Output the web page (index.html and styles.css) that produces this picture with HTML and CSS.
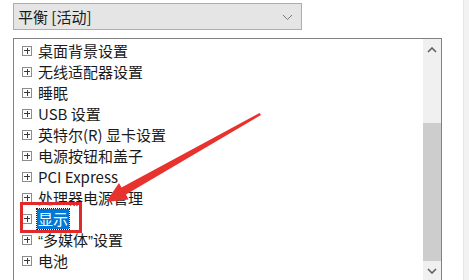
FILE: index.html
```html
<!DOCTYPE html>
<html lang="zh-CN">
<head>
    <meta charset="UTF-8">
    <title>电源选项 - 高级设置</title>
    <link rel="stylesheet" href="styles.css">
</head>
<body>
    <div class="page">
        <div class="panel">
            <div class="select">
                <span>平衡 [活动]</span>
                <svg class="chev" width="11" height="7" viewBox="0 0 11 7"><path d="M1 1 L5.5 5.5 L10 1" fill="none" stroke="#7a7a7a" stroke-width="1"/></svg>
            </div>
            <div class="tree">
                <ul class="items">
                    <li><i class="plus"></i><span>桌面背景设置</span></li>
                    <li><i class="plus"></i><span>无线适配器设置</span></li>
                    <li><i class="plus"></i><span>睡眠</span></li>
                    <li><i class="plus"></i><span>USB 设置</span></li>
                    <li><i class="plus"></i><span>英特尔(R) 显卡设置</span></li>
                    <li><i class="plus"></i><span>电源按钮和盖子</span></li>
                    <li><i class="plus"></i><span>PCI Express</span></li>
                    <li><i class="plus"></i><span>处理器电源管理</span></li>
                    <li><i class="plus"></i><span class="selected">显示</span></li>
                    <li><i class="plus"></i><span><span class="q">“</span>多媒体<span class="q">”</span>设置</span></li>
                    <li><i class="plus"></i><span>电池</span></li>
                </ul>
                <div class="scrollbar">
                    <div class="btn up"><svg width="10" height="6" viewBox="0 0 10 6"><path d="M1 5 L5 1 L9 5" fill="none" stroke="#606060" stroke-width="1.6"/></svg></div>
                    <div class="track"></div>
                    <div class="thumb"></div>
                    <div class="btn down"><svg width="10" height="6" viewBox="0 0 10 6"><path d="M1 1 L5 5 L9 1" fill="none" stroke="#606060" stroke-width="1.6"/></svg></div>
                </div>
            </div>
        </div>
        <div class="strip"></div>
    </div>

    <!-- 标注：红框和箭头 -->
    <div class="mark"></div>
    <svg class="arrow" width="469" height="280" viewBox="0 0 469 280">
        <polygon points="261,115 126,194.5 128.5,199.5 106,202 119,183 121.5,187.5 259.5,113" fill="#e8322e"/>
    </svg>
</body>
</html>
```

FILE: styles.css
```css
body {
    margin: 0;
    background: #fff;
    font-family: "Noto Sans CJK SC", "Noto Sans", sans-serif;
    color: #1a1a1a;
    font-size: 15px;
}
.page {
    display: flex;
    height: 280px;
    overflow: hidden;
}
.panel {
    width: 463px;
    padding: 3px 0 0 13px;
    box-sizing: border-box;
}
.strip {
    flex: 1;
    background: #f2f2f2;
    border-left: 1px solid #e6e6e6;
}
.select {
    width: 289px;
    height: 27px;
    box-sizing: border-box;
    border: 1px solid #adadad;
    background: #e5e5e5;
    display: flex;
    align-items: center;
    justify-content: space-between;
    padding: 0 8px 0 4px;
    line-height: 25px;
}
.chev {
    margin-top: 1px;
}
.tree {
    margin-top: 8px;
    width: 429px;
    height: 244px;
    box-sizing: border-box;
    border: 1px solid #828282;
    display: flex;
}
.items {
    list-style: none;
    margin: 0;
    padding: 1px 0 0 8px;
    flex: 1;
}
.items li {
    height: 21px;
    line-height: 21px;
    display: flex;
    align-items: center;
    white-space: nowrap;
}
.q {
    font-family: "Liberation Sans", sans-serif;
}
.plus {
    width: 10px;
    height: 10px;
    box-sizing: border-box;
    border: 1px solid #8c8c8c;
    margin-right: 6px;
    position: relative;
    flex-shrink: 0;
}
.plus::before,
.plus::after {
    content: "";
    position: absolute;
    background: #3a3a3a;
}
.plus::before {
    left: 1px;
    top: 3.5px;
    width: 6px;
    height: 1px;
}
.plus::after {
    left: 3.5px;
    top: 1px;
    width: 1px;
    height: 6px;
}
.selected {
    background: #0078d7;
    color: #fff;
    outline: 1px dotted #1c1c1c;
    padding: 0 1px;
    margin-left: -1px;
    line-height: 20px;
}
.scrollbar {
    width: 18px;
    display: flex;
    flex-direction: column;
    background: #f0f0f0;
}
.btn {
    display: flex;
    align-items: center;
    justify-content: center;
}
.up {
    height: 22px;
}
.track {
    height: 62px;
}
.thumb {
    height: 138px;
    background: #cdcdcd;
}
.down {
    height: 20px;
}
.mark {
    position: absolute;
    left: 20px;
    top: 202px;
    width: 62px;
    height: 31px;
    box-sizing: border-box;
    border: 3px solid #e0292b;
}
.arrow {
    position: absolute;
    left: 0;
    top: 0;
}
```
